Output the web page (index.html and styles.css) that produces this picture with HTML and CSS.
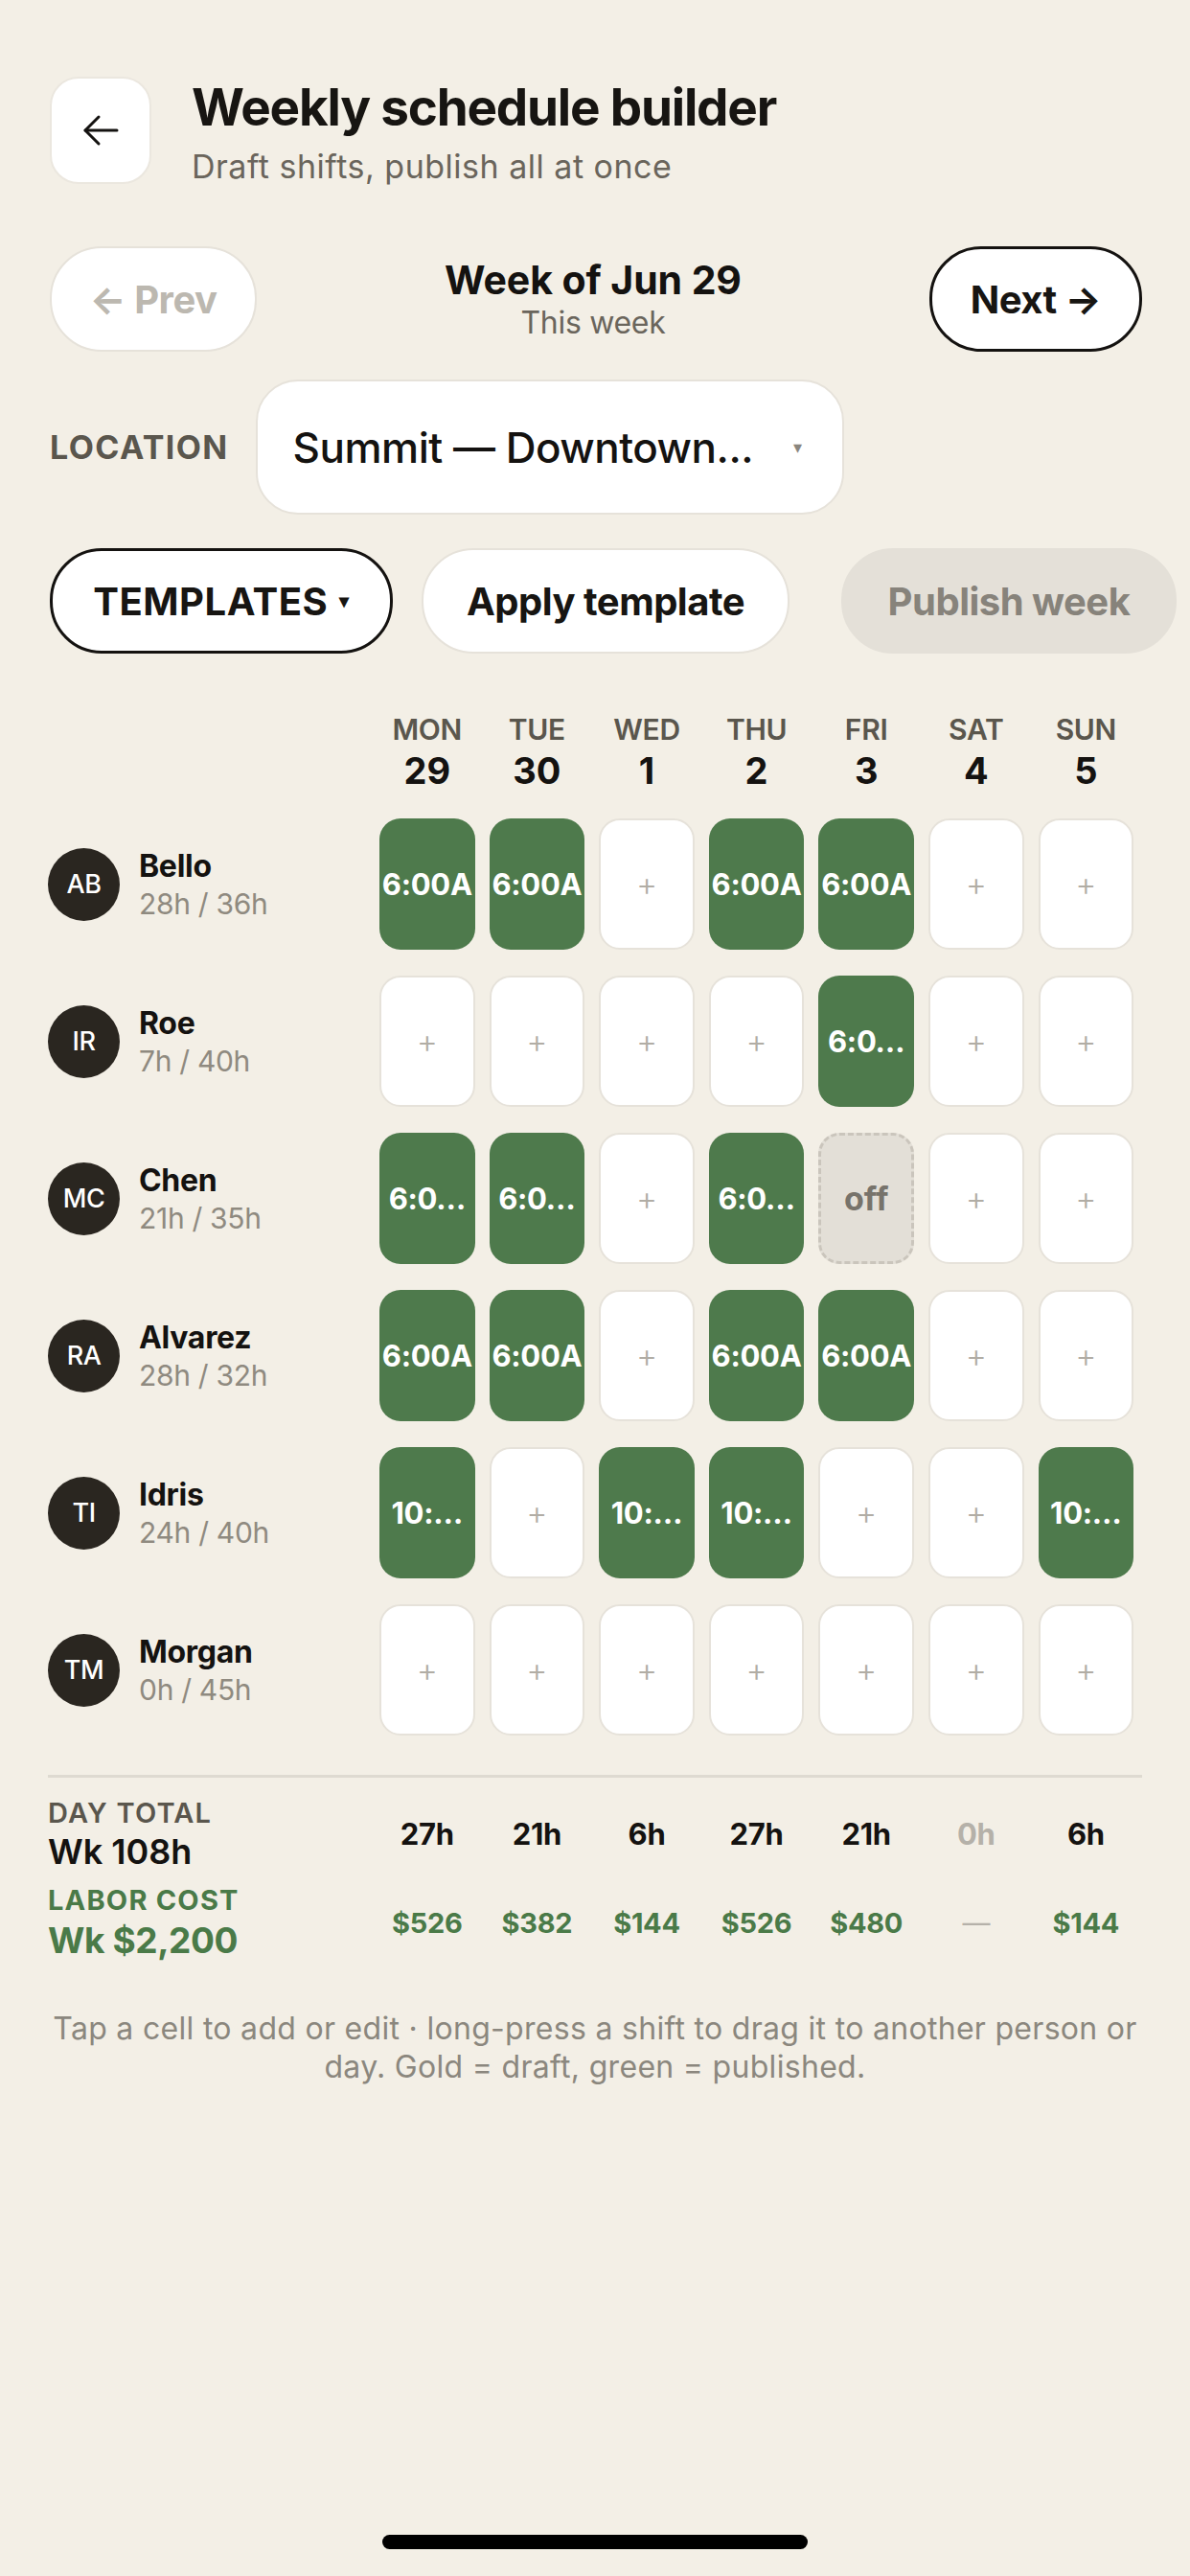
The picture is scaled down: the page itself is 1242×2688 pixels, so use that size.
FILE: index.html
```html
<!DOCTYPE html>
<html lang="en">
<head>
<meta charset="utf-8">
<title>Weekly schedule builder</title>
<link rel="stylesheet" href="styles.css">
</head>
<body>
<div class="screen">
  <header class="header">
    <button class="back-btn" aria-label="Back">
      <svg width="38" height="34" viewBox="0 0 38 34" fill="none" stroke="#141210" stroke-width="3" stroke-linecap="round" stroke-linejoin="round">
        <path d="M36 17H3"/>
        <path d="M17 3L3 17L17 31"/>
      </svg>
    </button>
    <div class="title-block">
      <h1 class="title">Weekly schedule builder</h1>
      <p class="subtitle">Draft shifts, publish all at once</p>
    </div>
  </header>

  <nav class="week-nav">
    <button class="pill pill-disabled nav-prev">← Prev</button>
    <div class="week-label">
      <div class="week-title">Week of Jun 29</div>
      <div class="week-sub">This week</div>
    </div>
    <button class="pill pill-dark nav-next">Next →</button>
  </nav>

  <div class="location-row">
    <span class="location-label">LOCATION</span>
    <div class="select">
      <span class="select-text">Summit — Downtown...</span>
      <span class="select-caret">▾</span>
    </div>
  </div>

  <div class="toolbar">
    <button class="pill pill-dark btn-templates">TEMPLATES <span class="caret">▾</span></button>
    <button class="pill btn-apply">Apply template</button>
    <button class="pill btn-publish">Publish week</button>
  </div>

  <div class="sched-row day-head">
    <div></div>
    <div class="dh"><span class="dow">MON</span><span class="dnum">29</span></div>
    <div class="dh"><span class="dow">TUE</span><span class="dnum">30</span></div>
    <div class="dh"><span class="dow">WED</span><span class="dnum">1</span></div>
    <div class="dh"><span class="dow">THU</span><span class="dnum">2</span></div>
    <div class="dh"><span class="dow">FRI</span><span class="dnum">3</span></div>
    <div class="dh"><span class="dow">SAT</span><span class="dnum">4</span></div>
    <div class="dh"><span class="dow">SUN</span><span class="dnum">5</span></div>
  </div>

  <div class="rows">
    <div class="sched-row">
      <div class="person"><span class="avatar">AB</span><div class="pinfo"><span class="pname">Bello</span><span class="phours">28h / 36h</span></div></div>
      <div class="cell shift">6:00A</div>
      <div class="cell shift">6:00A</div>
      <div class="cell empty">+</div>
      <div class="cell shift">6:00A</div>
      <div class="cell shift">6:00A</div>
      <div class="cell empty">+</div>
      <div class="cell empty">+</div>
    </div>
    <div class="sched-row">
      <div class="person"><span class="avatar">IR</span><div class="pinfo"><span class="pname">Roe</span><span class="phours">7h / 40h</span></div></div>
      <div class="cell empty">+</div>
      <div class="cell empty">+</div>
      <div class="cell empty">+</div>
      <div class="cell empty">+</div>
      <div class="cell shift">6:0…</div>
      <div class="cell empty">+</div>
      <div class="cell empty">+</div>
    </div>
    <div class="sched-row">
      <div class="person"><span class="avatar">MC</span><div class="pinfo"><span class="pname">Chen</span><span class="phours">21h / 35h</span></div></div>
      <div class="cell shift">6:0…</div>
      <div class="cell shift">6:0…</div>
      <div class="cell empty">+</div>
      <div class="cell shift">6:0…</div>
      <div class="cell off">off</div>
      <div class="cell empty">+</div>
      <div class="cell empty">+</div>
    </div>
    <div class="sched-row">
      <div class="person"><span class="avatar">RA</span><div class="pinfo"><span class="pname">Alvarez</span><span class="phours">28h / 32h</span></div></div>
      <div class="cell shift">6:00A</div>
      <div class="cell shift">6:00A</div>
      <div class="cell empty">+</div>
      <div class="cell shift">6:00A</div>
      <div class="cell shift">6:00A</div>
      <div class="cell empty">+</div>
      <div class="cell empty">+</div>
    </div>
    <div class="sched-row">
      <div class="person"><span class="avatar">TI</span><div class="pinfo"><span class="pname">Idris</span><span class="phours">24h / 40h</span></div></div>
      <div class="cell shift">10:…</div>
      <div class="cell empty">+</div>
      <div class="cell shift">10:…</div>
      <div class="cell shift">10:…</div>
      <div class="cell empty">+</div>
      <div class="cell empty">+</div>
      <div class="cell shift">10:…</div>
    </div>
    <div class="sched-row">
      <div class="person"><span class="avatar">TM</span><div class="pinfo"><span class="pname">Morgan</span><span class="phours">0h / 45h</span></div></div>
      <div class="cell empty">+</div>
      <div class="cell empty">+</div>
      <div class="cell empty">+</div>
      <div class="cell empty">+</div>
      <div class="cell empty">+</div>
      <div class="cell empty">+</div>
      <div class="cell empty">+</div>
    </div>
  </div>

  <div class="divider"></div>

  <div class="sched-row totals">
    <div class="tlabel">
      <span class="tcap">DAY TOTAL</span>
      <span class="tval">Wk 108h</span>
    </div>
    <div class="tday">27h</div>
    <div class="tday">21h</div>
    <div class="tday">6h</div>
    <div class="tday">27h</div>
    <div class="tday">21h</div>
    <div class="tday muted">0h</div>
    <div class="tday">6h</div>
  </div>

  <div class="sched-row totals cost">
    <div class="tlabel">
      <span class="tcap">LABOR COST</span>
      <span class="tval">Wk $2,200</span>
    </div>
    <div class="tcost">$526</div>
    <div class="tcost">$382</div>
    <div class="tcost">$144</div>
    <div class="tcost">$526</div>
    <div class="tcost">$480</div>
    <div class="tcost dash">—</div>
    <div class="tcost">$144</div>
  </div>

  <p class="footnote">Tap a cell to add or edit · long-press a shift to drag it to another person or day. Gold = draft, green = published.</p>

  <div class="home-indicator"></div>
</div>
</body>
</html>
```

FILE: styles.css
```css
* { box-sizing: border-box; }

html, body {
  margin: 0;
  padding: 0;
  background: #f3efe6;
}

body {
  font-family: Inter, "Noto Sans", "Liberation Sans", sans-serif;
  color: #1a1814;
}

.screen {
  position: relative;
  width: 1242px;
  height: 2688px;
  padding: 80px 50px 0 50px;
  overflow: hidden;
}

button {
  font-family: inherit;
  cursor: pointer;
}

/* ---------- header ---------- */
.header {
  display: flex;
  align-items: flex-start;
  gap: 42px;
}

.back-btn {
  width: 106px;
  height: 112px;
  flex: none;
  margin-left: 2px;
  border: 2px solid #ebe7df;
  border-radius: 30px;
  background: #fff;
  display: flex;
  align-items: center;
  justify-content: center;
  padding: 0;
}

.title-block {
  padding-top: 2px;
}

.title {
  margin: 0;
  font-size: 53px;
  line-height: 60px;
  font-weight: 700;
  letter-spacing: -1.2px;
  color: #171512;
}

.subtitle {
  margin: 12px 0 0;
  font-size: 34px;
  line-height: 40px;
  font-weight: 400;
  color: #6a655c;
  letter-spacing: 0.5px;
}

/* ---------- pills ---------- */
.pill {
  height: 110px;
  border-radius: 54px;
  background: #fff;
  border: 2px solid #e6e2da;
  font-size: 40px;
  font-weight: 700;
  color: #171512;
  padding: 0;
  display: flex;
  align-items: center;
  justify-content: center;
  white-space: nowrap;
  letter-spacing: -0.5px;
}

.pill-dark {
  border: 3px solid #141210;
}

.pill-disabled {
  color: #bcb8b0;
}

/* ---------- week nav ---------- */
.week-nav {
  margin-top: 63px;
  display: flex;
  align-items: center;
  justify-content: space-between;
}

.nav-prev {
  width: 216px;
  margin-left: 2px;
}

.nav-next {
  width: 222px;
}

.week-label {
  text-align: center;
}

.week-title {
  font-size: 41px;
  line-height: 46px;
  font-weight: 700;
  letter-spacing: -0.1px;
  color: #141210;
}

.week-sub {
  margin-top: 3px;
  font-size: 32px;
  line-height: 38px;
  color: #6a655c;
  letter-spacing: -0.3px;
}

/* ---------- location ---------- */
.location-row {
  margin-top: 29px;
  display: flex;
  align-items: center;
  gap: 28px;
}

.location-label {
  margin-left: 2px;
  font-size: 34px;
  font-weight: 700;
  letter-spacing: 1.4px;
  color: #5a564d;
}

.select {
  width: 614px;
  height: 141px;
  background: #fff;
  border: 2px solid #e6e2da;
  border-radius: 44px;
  display: flex;
  align-items: center;
  justify-content: space-between;
  padding: 0 42px 0 37px;
}

.select-text {
  font-size: 44px;
  font-weight: 500;
  letter-spacing: -0.5px;
  color: #141210;
}

.select-caret {
  font-size: 18px;
  color: #8a867e;
}

/* ---------- toolbar ---------- */
.toolbar {
  margin-top: 35px;
  display: flex;
  align-items: center;
  gap: 30px;
  width: 1300px;
}

.btn-templates {
  width: 358px;
  margin-left: 2px;
  letter-spacing: 0.5px;
}

.btn-templates .caret {
  font-size: 20px;
  margin-left: 12px;
}

.btn-apply {
  width: 384px;
}

.btn-publish {
  width: 350px;
  margin-left: 24px;
  background: #e4e0d8;
  border-color: #e4e0d8;
  color: #87837b;
}

/* ---------- schedule grid ---------- */
.sched-row {
  display: grid;
  grid-template-columns: 331px repeat(7, 99.6px);
  column-gap: 15px;
  align-items: center;
}

.day-head {
  margin-top: 61px;
}

.dh {
  display: flex;
  flex-direction: column;
  align-items: center;
}

.dow {
  font-size: 30px;
  line-height: 36px;
  font-weight: 600;
  color: #5a564d;
  letter-spacing: -0.3px;
}

.dnum {
  margin-top: 3px;
  font-size: 38px;
  line-height: 44px;
  font-weight: 700;
  color: #141210;
}

.rows {
  margin-top: 28px;
  display: flex;
  flex-direction: column;
  gap: 27px;
}

.person {
  display: flex;
  align-items: center;
  gap: 20px;
}

.avatar {
  width: 75px;
  height: 76px;
  border-radius: 50%;
  background: #2a2620;
  color: #fff;
  font-size: 27px;
  font-weight: 500;
  display: flex;
  align-items: center;
  justify-content: center;
  letter-spacing: -0.5px;
}

.pinfo {
  display: flex;
  flex-direction: column;
}

.pname {
  font-size: 32px;
  line-height: 38px;
  font-weight: 700;
  color: #141210;
  letter-spacing: -0.3px;
}

.phours {
  margin-top: 2px;
  font-size: 30px;
  line-height: 36px;
  color: #8f8a80;
  letter-spacing: -0.3px;
}

.cell {
  height: 137px;
  border-radius: 22px;
  display: flex;
  align-items: center;
  justify-content: center;
  white-space: nowrap;
  overflow: hidden;
}

.shift {
  background: #4e7a4c;
  color: #fff;
  font-size: 31px;
  font-weight: 700;
  letter-spacing: -0.3px;
}

.empty {
  background: #fff;
  border: 2px solid #e6e2da;
  color: #b1ada5;
  font-size: 34px;
  font-weight: 300;
}

.off {
  background: #e3dfd7;
  border: 3px dashed #cac5bc;
  color: #77736b;
  font-size: 34px;
  font-weight: 700;
}

/* ---------- totals ---------- */
.divider {
  margin-top: 41px;
  height: 3px;
  background: #dedad1;
}

.totals {
  margin-top: 20px;
}

.totals.cost {
  margin-top: 14px;
}

.tlabel {
  display: flex;
  flex-direction: column;
}

.tcap {
  font-size: 29px;
  line-height: 34px;
  font-weight: 600;
  letter-spacing: 1.2px;
  color: #5a564d;
}

.tval {
  margin-top: 3px;
  font-size: 36px;
  line-height: 40px;
  font-weight: 600;
  color: #141210;
  letter-spacing: 0;
}

.tday {
  text-align: center;
  font-size: 31px;
  font-weight: 700;
  color: #141210;
  letter-spacing: -0.3px;
}

.tday.muted {
  color: #b5b1a9;
}

.cost .tcap {
  color: #4a7a48;
  font-weight: 700;
}

.cost .tval {
  font-size: 37px;
  line-height: 44px;
  font-weight: 700;
  color: #4a7a48;
  letter-spacing: -0.4px;
}

.tcost {
  text-align: center;
  font-size: 29px;
  font-weight: 700;
  color: #4a7a48;
  letter-spacing: -0.3px;
}

.tcost.dash {
  color: #b5b1a9;
  font-weight: 400;
}

/* ---------- footnote ---------- */
.footnote {
  margin: 50px 0 0;
  text-align: center;
  font-size: 32px;
  line-height: 40px;
  color: #8b877e;
  letter-spacing: 0.3px;
}

/* system home indicator overlay */
.home-indicator {
  position: absolute;
  left: 399px;
  bottom: 28px;
  width: 444px;
  height: 15px;
  border-radius: 8px;
  background: #000;
}
```
